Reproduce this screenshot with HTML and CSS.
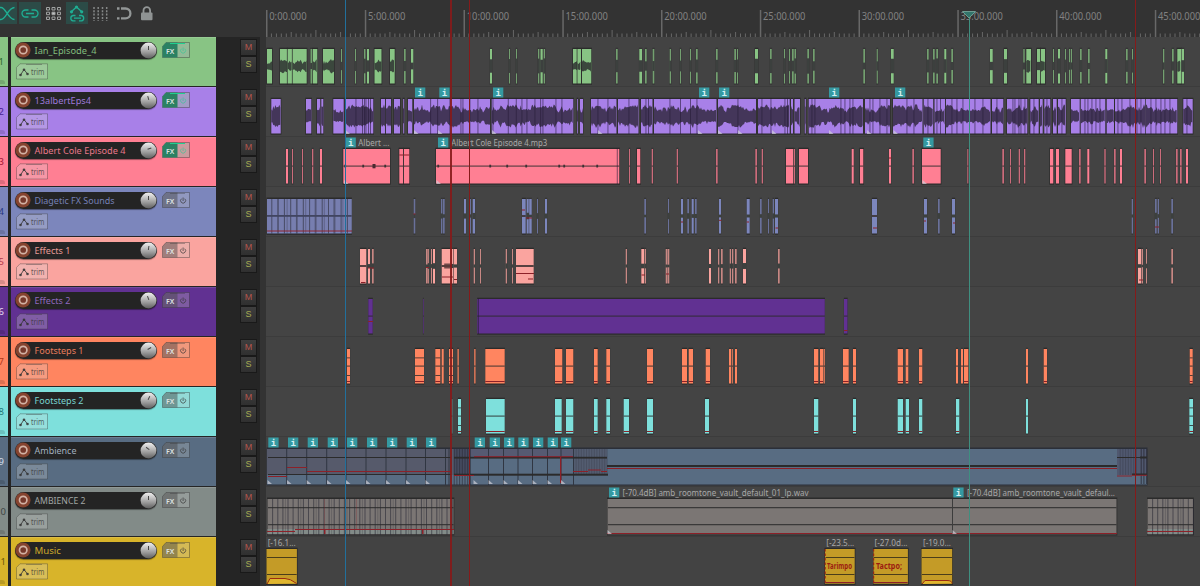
FILE: index.html
```html
<!DOCTYPE html>
<html lang="en">
<head>
<meta charset="utf-8">
<title>Arrange view</title>
<link rel="stylesheet" href="styles.css">
</head>
<body>
<div class="app">
  <aside class="side">
    <div class="toolbar">
      <span class="tool on first"><svg width="17" height="22" viewBox="0 0 17 22"><path d="M0 5.500h1C6 5.500 8 17.500 14.500 17.500M0 17.500h1C6 17.500 8 5.500 14.500 5.500" class="ic-on"/></svg></span>
      <span class="tool on"><svg width="22" height="22" viewBox="0 0 22 22"><path d="M9.500 8H6.500a3.500 3.500 0 0 0 0 7h3M12.500 8h3a3.500 3.500 0 0 1 0 7h-3M7 11.500h8" class="ic-on"/></svg></span>
      <span class="tool grid"><svg width="24" height="22" viewBox="0 0 24 22"><g class="ic-box"><path d="M4.500 5.500h3v2.500h-3zM10 5.500h3v2.500h-3zM15.500 5.500h3v2.500h-3zM4.500 10.200h3v2.500h-3zM15.500 10.200h3v2.500h-3zM4.500 15h3v2.500h-3zM10 15h3v2.500h-3zM15.500 15h3v2.500h-3z"/><path d="M10 10.200h3v2.500h-3z" class="ic-fill"/></g></svg></span>
      <span class="tool on"><svg width="22" height="22" viewBox="0 0 22 22"><path d="M5 10l5.500-5 5.500 5M9.500 13.500H7a2.700 2.700 0 0 0 0 5.300h2.500M13 13.500h2.500a2.700 2.700 0 0 1 0 5.300H13M8 16.200h7" class="ic-on"/><g fill="#1fae93"><circle cx="5.500" cy="9.800" r="1.600"/><circle cx="10.500" cy="5" r="1.600"/><circle cx="15.700" cy="9.800" r="1.600"/></g></svg></span>
      <span class="tool"><svg width="24" height="22" viewBox="0 0 24 22"><path d="M6 5v14M10.200 5v14M14.500 5v14M18.700 5v14" class="ic-dots"/></svg></span>
      <span class="tool"><svg width="24" height="22" viewBox="0 0 24 22"><path d="M9 6.500h4.500a4.800 4.800 0 0 1 0 9.800H9" class="ic-mag"/><path d="M5 6.500h2.500M5 16.300h2.500" class="ic-mag"/></svg></span>
      <span class="tool"><svg width="22" height="22" viewBox="0 0 22 22"><path d="M7.500 11V8.500a3.300 3.300 0 0 1 6.600 0V11" class="ic-mag thin"/><rect x="5" y="10.500" width="11.500" height="7.800" rx="1" fill="#8f9393"/></svg></span>
    </div>
    <div class="panels" id="panels"></div>
  </aside>
  <main class="arrange">
    <div class="ruler" id="ruler"></div>
    <div class="lanes" id="lanes"></div>
    <i class="line edit"></i>
    <i class="line loop wide"></i>
    <i class="line loop mid"></i>
    <i class="line loop end"></i>
    <i class="line play"></i>
    <svg class="playhead" width="14" height="8" viewBox="0 0 14 8"><path d="M.500.500h13L7 7z"/></svg>
  </main>
</div>
<script src="app.js"></script>
</body>
</html>
```
FILE: styles.css
```css
* { box-sizing: border-box; }
body {
  margin: 0;
  width: 1200px;
  height: 586px;
  overflow: hidden;
  background: #333;
  font-family: "Noto Sans", "Open Sans", sans-serif;
}
svg { display: block; }
.app { display: flex; height: 586px; overflow: hidden; }
.side { width: 266px; flex: none; }

/* toolbar */
.toolbar { height: 37px; padding-top: 2px; display: flex; align-items: flex-start; background: #333; }
.tool { height: 22px; }
.tool.on { background: #2c4b47; }
.tool.first { margin-right: 2px; }
.tool.grid { margin-left: 1px; }
.tool svg { fill: none; }
.ic-on { stroke: #1fae93; stroke-width: 1.3; }
.ic-box { stroke: #a0a2a2; stroke-width: 1; }
.ic-fill { fill: #c0c2c2; }
.ic-dots { stroke: #858888; stroke-width: 1.500; stroke-dasharray: 2 1.300; }
.ic-mag { stroke: #939797; stroke-width: 2.300; }
.ic-mag.thin { stroke-width: 1.800; }

/* track panels */
.panel { height: 50px; display: flex; background: #252525; }
.index {
  width: 8px; height: 49px; background: var(--c); overflow: hidden; position: relative;
  font-size: 9.500px; line-height: 49px; color: var(--n);
  display: flex; justify-content: flex-end; padding-right: 4px;
}
.index.two { padding-right: 2px; }
.index::after {
  content: ""; position: absolute; right: 3px; bottom: 2px; width: 6px; height: 4px;
  background: rgba(0,0,0,.14); border-radius: 0 3px 0 0;
}
.body { width: 205px; height: 49px; margin-left: 3px; background: var(--c); padding: 4px 0 0 4px; box-shadow: inset 0 1px rgba(255,255,255,.12); }
.top { display: flex; align-items: center; height: 18px; }
.pill {
  width: 142px; height: 17px; border-radius: 9px; background: #242424;
  display: flex; align-items: center; box-shadow: 0 1px 1px rgba(0,0,0,.4);
}
.rec { width: 16px; height: 16px; flex: none; }
.name { flex: 1; height: 17px; }
.name text { font-size: 9.700px; fill: var(--t); }
.knob { width: 17px; height: 17px; flex: none; }
.fx { margin-left: 5px; }
.trim { margin: 4px 0 0 1px; }
.ms { margin-left: 25px; padding-top: 3px; display: flex; flex-direction: column; gap: 2px; }
.ms b {
  width: 15px; height: 15px; background: linear-gradient(#3e3e3e, #303030);
  box-shadow: 0 0 0 1px #191919; font-size: 9px; font-weight: 400; line-height: 15px; text-align: center;
  font-family: "Liberation Sans", sans-serif;
}
.ms b { color: #b5564d; }
.ms b + b { color: #a9ac53; }
.gutter { width: 6px; margin-left: auto; background: #333; }

/* arrange */
.arrange { width: 934px; position: relative; background: #434343; }
.ruler { height: 37px; background: #333; }
.ruler text { font-size: 10px; fill: #818181; }
.lane { height: 50px; border-bottom: 1px solid #3c3c3c; background: #434343; }
.lane:nth-child(even) { background: #444; }
.lane text { font-size: 8px; fill: #a8a8a8; }
.lane .tempo { font-size: 8px; font-weight: 700; fill: #9c1c10; }
.lane .i { font-family: "DejaVu Sans Mono", monospace; font-size: 9px; font-weight: 700; fill: #d5f0f0; }
.line { position: absolute; top: 0; bottom: 0; width: 1px; }
.edit { left: 79px; background: #22709c; }
.loop { background: #861a1a; }
.loop.wide { left: 184px; width: 2px; opacity: .9; }
.loop.mid { left: 203px; }
.loop.end { left: 869px; }
.play { left: 703px; top: 13px; background: #3f8f80; }
.playhead { position: absolute; left: 696px; top: 11px; fill: #32756b; stroke: #6d9c92; }
```
FILE: app.js
```js
// Each track: colour, number colour, name colour, name width, knob angle, fx state and clip spans in arrange pixels.
var tracks = [
  { name: 'Ian_Episode_4', w: 62, c: '#88c484', n: '#2f6a2d', t: '#82bd7e', k: 0, fx: 1, amp: 6,
    clips: '267-272 280-287.3 287.6-292.3 292.6-306.7 310.5-312 312.7-317.3 323-334 341-342 355-356 364-365.500 367-369 374.500-381.500 390-394.7 404-405.7 411-413.3 490-492 509-510 516-517 538-539.3 540.500-542.7 543.7-545 573-577 577.4-581 582-591.3 616-617.7 639.3-642 645-646.7 652.7-654.3 669.7-671 680-681 690-691 696-697.7 716-717.7 734.3-736 737-738 755-758 770-771.7 784-785 789-790 792-793.7 794.500-796 807.3-809 813-814.7 863.3-865 876.7-877.8 891-893.7 927-928.7 933-934.7 936.3-938 944.3-946.3 951.3-953 990-992.7 1004-1007 1023.3-1024.7 1026.3-1031 1037-1040.3 1040.8-1045 1053-1054 1058-1060 1065-1066 1069-1070 1070.8-1072 1080-1081.7 1088-1089.7 1105.3-1107.3 1126-1127.7 1132-1133 1163-1164.3 1172-1173.7 1177.3-1181.2 1181.6-1184' },
  { name: '13albertEps4', w: 56.5, c: '#a880e8', n: '#4b2391', t: '#9d79da', k: -15, fx: 1, amp: 10, solid: 1,
    clips: '271.3-280.7 306-311.3 317-320.3 321.3-323.3 333.3-343.7 345.3-373.3 381-385.3 386-391 394-400 403-404.3 408-412.3 414-490 491.7-573.3 577-578 580-583 591-616.500 618-638.500 641-652.500 654-716.500 718-756 758-789.7 791-793 794.5-800 804.7-806 808.7-863 865-890 893-922.500 923.7-933.3 934.500-945.3 946-990.500 992-1003.3 1007-1027.3 1030.3-1038.7 1040-1042.7 1044.3-1050.3 1053-1056.7 1058-1065.7 1071-1079.7 1080.7-1105.3 1106.7-1114 1115-1145 1145.7-1177.3 1183.3-1192.7',
    cuts: [356,362.5,364.5,366,368.5,370.5,430.7,437.7,450,461,463,470,478,493,508.3,516.3,522,527,535,540.7,543,556,562,598,608,629,646,648.500,670,680.500,690.500,697,738,762,771,785,787.500,812,815,841,845,850,853,870,873,880,887,907,914,928,937,940.500,952,957,963,975,983,997,1013,1015,1019,1021,1025,1034,1047,1062,1085,1088,1092,1096,1100,1118,1122,1130,1137,1141,1151,1156,1161,1165,1170,1187],
    info: [415,439.3,493,699,719,829,895], tri: [345.5,414,438,492,598,698,718,738,772,829,867,893.500] },
  { name: 'Albert Cole Episode 4', w: 91, c: '#ff7f93', n: '#a31733', t: '#e8788a', k: 70, fx: 1, amp: 1.200,
    clips: '286-288 292-293 302-303 312-313.3 320-322 343.3-390 399.3-403.4 404-409.3 436-619.3 629-630 637-640.3 651.7-653 676.7-678 716-717.7 755.3-757 761.7-763 786-793.4 793.9-795 799-808 851.7-853.7 860-863.3 889-891 912.3-914 922-940.7 967.3-968.3 1002.3-1004 1010-1011 1018.7-1020 1024-1025.3 1050-1053.3 1056-1059 1065.3-1071.7 1079-1080.7 1087.3-1089.3 1104.3-1105.7 1114-1115.7 1120-1122 1144.3-1146 1153-1154 1160-1161 1176-1177.7 1180-1181.7 1186-1188',
    blips: [363,374,385,490,507,526,559,564,583,597,345,438],
    cuts: [617.3], red: [[399.3,409.3,18],[889,891.5,21]], info: [345.500,438,923.3], tri: [344,436.500,922.500], labels: [[358.3,'Albert ...',31],[451.3,'Albert Cole Episode 4.mp3',96]] },
  { name: 'Diagetic FX Sounds', w: 80, c: '#7c86bc', n: '#273880', t: '#7580b6', k: 0, amp: 2.500, soft: 1,
    clips: '413.7-415.3 441-442.5 443-444.7 464-466 469.7-471 472.7-475 522-525.7 526.7-528.7 529.2-531.7 537-538 545-547 644.3-646 668-669 681-683 687.3-689 691.7-693.7 695-696.7 719-721 746.7-749.7 760-761.7 768-769 772.7-774 775-778 872-877 924-927 938-939.7 952-955 1131.7-1133 1155-1156.7 1157.7-1159 1171.3-1173',
    comb: [[267,351.7,6.3]], red: [[267,352,44],[526,532,31],[522,525,23],[413.5,415.5,27],[719,721.5,33.3],[873,877,41],[746.7,749,35],[775.5,778,41],[1155,1159,40],[953,955,36],[924,926,34],[681,683,35]] },
  { name: 'Effects 1', w: 36, c: '#faa49f', n: '#b33a4a', t: '#e69b96', k: 8, amp: 2.300, soft: 1,
    clips: '360-366.3 368-370 372-373.7 426-427.8 428.1-429 431-432 433-435 441.7-451 451.3-453.4 453.7-457 473.7-475 480-481 505.7-507 512-513 516-533.7 625.7-627 641.3-644.3 644.8-646 665.7-667 667.4-669.3 709-711 718-719.3 721-722.7 729.7-731 732-733.3 735-736.7 743-746 778-779.7 1138-1141.4 1141.8-1143 1146-1147 1171.3-1173',
    red: [[361,365.5,45.5],[442,453,40],[454,457,42.500],[516,534,36.500],[528,533,42],[368,374,31],[426,429,30.5],[641.500,645,38],[1139,1143,43],[666,669,37]] },
  { name: 'Effects 2', w: 36, c: '#613192', n: '#e8ddf5', t: '#9068bd', k: -20, amp: .900, soft: 1,
    clips: '368.3-372.7 423-423.8 477.3-824.8 844-847.500', cuts: [478.5], red: [[368,373,34.500],[844,847.500,43.500]] },
  { name: 'Footsteps 1', w: 49, c: '#ff8560', n: '#b33818', t: '#e87d5c', k: 60, amp: .900, soft: 1,
    clips: '347-350 415-424 435.3-440.3 441.7-443.7 449-453 457.3-459 474-475.7 485.3-504.7 555-562.3 566-573.3 594-597.7 606.3-610 647-653 682-687 688.7-693 705.7-710 729-731 731.7-733 735-737 814-818.3 820-823 823.4-825 843-848.7 853-856 897.7-903 905.7-908.3 919-922.3 956-958 961-963 964-968.3 1026-1028 1043.7-1047 1189.7-1192.7', redAll: 44.500 },
  { name: 'Footsteps 2', w: 49, c: '#7ee0dc', n: '#257a78', t: '#79d4d0', k: 25, amp: .900, soft: 1,
    clips: '451-452.3 458-461 486-504.7 555-561.7 566-573.3 594-597.7 606.3-610 623.7-629 647-653 705-709 814-818.3 853-856 897.7-903 905.7-909 919-922.3 956-959.3 1026-1028 1189.3-1193', redAll: 44.500 },
  { name: 'Ambience', w: 42, c: '#586c82', n: '#d3deea', t: '#a2b0bf', k: -55, special: 'amb',
    info: [268.3,288,307.7,327.7,347,367,387,406.7,426,474.7,489.7,504,518.3,533,547.7,561],
    tri: [267.5,287,306.7,327,346,366,386,406,425.500,473.500,488.500,503.500,518,532.500,547.500,561] },
  { name: 'AMBIENCE 2', w: 51, c: '#828b88', n: '#3f4644', t: '#a1a4a3', k: 0, special: 'amb2',
    info: [609,953.3], tri: [607.500,952.500], labels: [[622.500,'[-70.4dB] amb_roomtone_vault_default_01_lp.wav',186],[967,'[-70.4dB] amb_roomtone_vault_defaul...',148]] },
  { name: 'Music', w: 26.5, c: '#d8b42a', n: '#6e5808', t: '#cca92b', k: 0, special: 'music',
    labels: [[267.7,'[-16.1...',28],[826.3,'[-23.5...',28],[874.500,'[-27.0d...',33],[923,'[-19.0...',28]] }
];

var DARK = '#2b2b2b', RED = '#8c2028';
var seed = 7;
function rnd() { seed = (seed * 16807) % 2147483647; return seed / 2147483647; }
function rect(x, y, w, h, f, o) {
  return '<rect x="' + x + '" y="' + y + '" width="' + w + '" height="' + h + '" fill="' + f + '"' + (o ? ' opacity="' + o + '"' : '') + '/>';
}
function redLine(a, b, y) { return rect(a, y - .5, b - a, 1, RED); }

function clip(t, a, b) {
  var w = b - a, s = '', side = t.soft ? .15 : w > 3 ? .7 : .4;
  s += rect(a - side, 10.7, w + side * 2, 37, w > 2.8 || t.solid ? DARK : '#353535');
  s += rect(a, 12, w, 34.500, t.c, w < 1.9 ? .75 : 0);
  if (t.amp < 2) {
    s += rect(a, 28.500, w, 1.200, DARK, .75);
  } else if (w < 3.500 && !t.solid) {
    var g = t.amp * (.5 + rnd() * .8);
    s += rect(a - .3, 29 - g, w + .6, g * 2, '#3c403e');
  } else if (t.soft) {
    s += rect(a, 28, w, 2, '#3a3030', .85);
    if (a > 440 && a < 452) s += rect(a + 2.500, 26.500, w - 3, 5, '#5a3a3a', .85);
  } else {
    var d = 'M' + a + ' 29', low = [], h = t.amp * .7;
    for (var x = a; x <= b; x += 1) {
      h += (rnd() - .5) * t.amp * .5;
      h = Math.max(t.amp * .5, Math.min(t.amp, h));
      var spike = (rnd() - .5) * t.amp * .35;
      d += 'L' + x.toFixed(1) + ' ' + (29 - h + spike).toFixed(1);
      low.unshift(x.toFixed(1) + ' ' + (29.500 + h * (.8 + rnd() * .35)).toFixed(1));
    }
    s += '<path d="' + d + 'L' + low.join('L') + 'z" fill="' + (t.solid ? '#3c304f' : '#353d38') + '" opacity=".93"/>';
  }
  return s;
}

function stripes(a, b, step, y, h, o) {
  var s = '';
  for (var x = a + step; x < b; x += step) s += rect(x.toFixed(1), y, 1, h, '#2a2a35', o || .6);
  return s;
}

var special = {
  amb: function () {
    var s = rect(266.500, 10.500, 881, 38, '#2b2f38') + rect(267, 12, 880, 35.500, '#586c82');
    s += rect(267, 12, 187, 26, '#565a6b') + rect(454, 12, 119, 8, '#565a72') + rect(454, 12, 16, 26, '#454b60') + rect(573, 12, 34, 26, '#535c70') + rect(1117, 12, 30, 26, '#50586f');
    [286.7,306.7,326.7,346,366,386,406,425.500,445.500,449,488.500,503.500,518,532.500,547.500,561,573.500].forEach(function (x) { s += rect(x - .5, 12, 1, 36, '#303642'); });
    s += stripes(451, 470, 2.700, 12, 36) + stripes(573, 607, 2.600, 12, 26, .25) + stripes(1117, 1138, 2.700, 12, 26, .3) + stripes(1138, 1147, 2.700, 12, 35, .8);
    s += rect(268, 20, 183, 1, DARK) + rect(268, 37, 183, 1, DARK);
    s += rect(454, 19.800, 153, 1.800, DARK) + rect(454, 36.700, 154, 2, DARK) + rect(607, 28, 510, 2, DARK);
    s += rect(1117, 20, 30, 1, DARK) + rect(1140, 19.5, 7, 2, DARK) + rect(1132, 36.500, 15, 1.500, DARK);
    s += redLine(268, 287, 39.500) + redLine(287, 307, 30.500) + redLine(307, 451, 34.500) + redLine(454, 474, 38.500) + redLine(474, 573, 19.700);
    s += redLine(573, 588, 34.500) + redLine(588, 601, 33) + redLine(601, 607, 34.500) + redLine(607, 1117, 31.500) + redLine(1117, 1132, 39) + redLine(1132, 1147, 38.300) + rect(560, 20, 1.300, 26, RED);
    return s;
  },
  amb2: function () {
    var s = '';
    [[267,454],[607,1117],[1147,1193.500]].forEach(function (p) {
      s += rect(p[0], 10.500, p[1] - p[0] + .3, 38, DARK) + rect(p[0] + .5, 12, p[1] - p[0] - 1, 35.300, '#7b7674');
      if (p[0] !== 607) s += rect(p[0] + .5, 42, p[1] - p[0] - 1, 5, '#828b88') + stripes(p[0], p[1], p[0] > 1000 ? 5.100 : 5.130, 12, 36, .6) + stripes(p[0] + 2.500, p[1], 15.400, 12, 36, .25);
      s += rect(p[0] + 1, 20.200, p[1] - p[0] - 1.500, 1, DARK) + rect(p[0] + 1, 37.200, p[1] - p[0] - 1.500, 1, DARK);
    });
    s += rect(952, 12, 1, 35, '#3c3c3c') + redLine(267, 295, 44.500) + redLine(295, 454, 42.500) + redLine(607, 1117, 46.500) + redLine(1147, 1193, 44.500);
    return s + rect(324, 42, 1.500, 5, RED) + rect(422, 42, 1.500, 5, RED) + rect(324, 12, .7, 30, RED, .35) + rect(356, 12, .7, 30, RED, .35);
  },
  music: function () {
    var s = '';
    [[266,297.7],[824.500,855.500],[873,908.700],[921,953]].forEach(function (p, n) {
      var w = p[1] - p[0];
      s += rect(p[0], 10.700, w, 37.300, DARK) + rect(p[0] + .5, 12, w - 1.300, 34.700, '#c49b27');
      s += rect(p[0] + 1, 20, w - 2, 1, '#4a3d1a') + rect(p[0] + 1, 37, w - 2, 1, '#4a3d1a');
      if (n === 1 || n === 2) s += redLine(p[0] + 1, p[1] - 1, 45.500) + '<path d="M' + (p[0] + .7) + ' 12v34" stroke="#9c1c10" stroke-dasharray="2.500 2"/>';
      else {
        var y = n ? 43.500 : 41.500, q = n ? p[1] - 6 : p[0] + 19;
        s += '<path d="M' + (p[0] + 1) + ' 47L' + (p[0] + 4) + ' ' + y + 'H' + q + 'Q' + (q + 5) + ' ' + y + ' ' + (p[1] - 1) + ' 46.5" fill="#e0b62f" stroke="#9c2a10"/>';
      }
    });
    return s + '<text class="tempo" x="827" y="32" textLength="25" lengthAdjust="spacingAndGlyphs">Tarimpo</text><text class="tempo" x="876" y="32" textLength="26" lengthAdjust="spacingAndGlyphs">Tactpo;</text>';
  }
};

function lane(t) {
  var s = '';
  (t.comb || []).forEach(function (p) {
    s += rect(p[0] - .5, 10.5, p[1] - p[0] + .700, 37.300, DARK) + rect(p[0], 12, p[1] - p[0], 34.500, t.c) + rect(p[0], 12, p[1] - p[0], 31, '#6f7199', .35);
    s += stripes(p[0] - 2, p[1], p[2], 12, 34.500, .6) + stripes(p[0] + 1, p[1], 9.300, 12, 34.500, .3) + rect(p[0], 28, p[1] - p[0], 1.800, '#414561');
  });
  if (t.clips) t.clips.split(' ').forEach(function (p) {
    var q = p.split('-'), a = +q[0], b = +q[1];
    s += clip(t, a, b);
    if (t.redAll && b - a > 2.5) s += redLine(a, b, t.redAll);
    if (t.redAll && ((a < 460 && b - a > 2.5) || a > 1180)) s += rect(a, 20.500, b - a, .8, DARK) + rect(a, 38, b - a, .8, DARK);
  });
  (t.blips || []).forEach(function (x) { s += rect(x - .700, 27.700, 1.800, 2.800, DARK, .85); });
  if (t.amp === 1.200) s += rect(372.500, 27, 3, 4.300, '#4a2a30');
  (t.cuts || []).forEach(function (x) { s += rect(x - .5, 11, .9, 36, '#261c38', .65); });
  if (t.special) s += special[t.special]();
  (t.red || []).forEach(function (r) { s += redLine(r[0], r[1], r[2]); });
  (t.tri || []).forEach(function (x) { s += '<path d="M' + x + ' 43v4h4.500z" fill="#d0d0d8" opacity=".7"/>'; });
  (t.info || []).forEach(function (x) { s += rect(x, .5, 10.300, 10, '#3599a1') + '<text class="i" x="' + (x + 2.500) + '" y="8.700">i</text>'; });
  (t.labels || []).forEach(function (l) { s += '<text x="' + l[0] + '" y="8.700" textLength="' + l[2] + '" lengthAdjust="spacingAndGlyphs">' + l[1] + '</text>'; });
  return '<div class="lane"><svg width="934" height="49" viewBox="266 0 934 49">' + s + '</svg></div>';
}

function fxButton(t) {
  var on = t.fx;
  return '<svg class="fx" width="28" height="16" viewBox="0 0 28 16">' +
    '<path d="M.5 15.500V4.500L4 .500H27.500V15.500z" fill="' + (on ? '#9fb3a8' : '#c8c8c8') + '" fill-opacity="' + (on ? .55 : .28) + '" stroke="#333" stroke-opacity=".4"/>' +
    '<path d="M.5 15.500V4.500L4 .500H15.500V15.500z" fill="' + (on ? '#2b8163' : '#444') + '" fill-opacity="' + (on ? 1 : .45) + '"/>' +
    '<path d="M8 1.500h15" stroke="' + (on ? '#1fd08f' : '#333') + '" stroke-opacity="' + (on ? 1 : .35) + '"/>' +
    '<text x="4" y="12" font-size="7.500" font-weight="600" fill="#dfe4e1" textLength="8.300" lengthAdjust="spacingAndGlyphs">FX</text>' +
    '<path d="M19.500 6.700a2.500 2.500 0 1 0 3.200 0M21.100 5.500v3.500" fill="none" stroke="' + (on ? '#35c996' : '#333') + '" stroke-opacity=".75" stroke-width=".9"/></svg>';
}

function panel(t, i) {
  return '<div class="panel" style="--c:' + t.c + ';--n:' + t.n + ';--t:' + t.t + '">' +
    '<div class="index' + (i > 8 ? ' two' : '') + '">' + (i + 1) + '</div>' +
    '<div class="body"><div class="top"><div class="pill">' +
    '<svg class="rec" viewBox="0 0 16 16"><circle cx="8" cy="8" r="7.600" fill="#85432f"/><circle cx="8.200" cy="8" r="3.700" fill="#75382b" stroke="#d3b2a5" stroke-width="1.700"/></svg>' +
    '<svg class="name" viewBox="0 0 109 17"><text x="3.500" y="12" textLength="' + t.w + '" lengthAdjust="spacingAndGlyphs">' + t.name + '</text></svg>' +
    '<svg class="knob" viewBox="0 0 17 17"><defs><linearGradient id="kg' + i + '" x2="0" y2="1"><stop offset="0" stop-color="#f0f0f0"/><stop offset=".55" stop-color="#a5a5a5"/><stop offset="1" stop-color="#606060"/></linearGradient></defs><circle cx="8.500" cy="8.500" r="7.900" fill="url(#kg' + i + ')"/><path d="M8.500 8V4" stroke="#444" transform="rotate(' + t.k + ' 8.500 7)"/></svg>' +
    '</div>' + fxButton(t) + '</div>' +
    '<svg class="trim" width="32" height="17" viewBox="0 0 32 17"><path d="M.5 16V4.500L4 .800H31.500V16z" fill="#ddd" fill-opacity=".26" stroke="#333" stroke-opacity=".35"/><path d="M10 1.500h16" stroke="#333" stroke-opacity=".35"/><path d="M4.500 12L8 6.500 11.500 11" fill="none" stroke="#333" stroke-opacity=".8"/><g fill="#333" fill-opacity=".85"><circle cx="4.500" cy="12" r="1.300"/><circle cx="8" cy="6.800" r="1.300"/><circle cx="11.500" cy="11" r="1.300"/></g><text x="15" y="12" font-size="8.500" fill="#333" fill-opacity=".75" textLength="13.500" lengthAdjust="spacingAndGlyphs">trim</text></svg>' +
    '</div><div class="ms"><b>M</b><b>S</b></div><div class="gutter"></div></div>';
}

function ruler() {
  var s = '', step = 98.750;
  for (var i = 0; i < 190; i++) {
    var x = 266.500 + i * step / 20, h = i % 20 === 0 ? 27 : i % 10 === 0 ? 7 : i % 5 === 0 ? 5 : 3.500;
    s += rect((x - .5).toFixed(1), 37 - h, i % 20 === 0 ? 1.500 : 1, h, '#686868');
    if (i % 20 === 0) s += '<text x="' + (x + 2.700) + '" y="20" textLength="' + (i < 40 ? 37.500 : 42.500) + '" lengthAdjust="spacingAndGlyphs">' + i / 4 + ':00.000</text>';
  }
  return '<svg width="934" height="37" viewBox="266 0 934 37">' + s + '</svg>';
}

document.getElementById('ruler').innerHTML = ruler();
document.getElementById('panels').innerHTML = tracks.map(panel).join('');
document.getElementById('lanes').innerHTML = tracks.map(lane).join('');
```
